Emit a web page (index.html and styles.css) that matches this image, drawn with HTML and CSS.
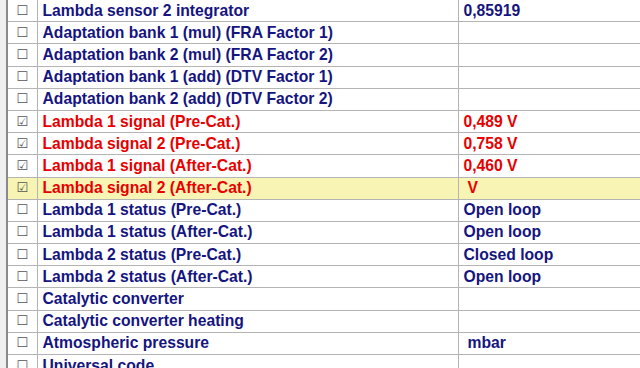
FILE: index.html
```html
<!DOCTYPE html>
<html>
<head>
<meta charset="utf-8">
<link rel="stylesheet" href="styles.css">
</head>
<body>
<div class="frame">
  <div class="gutter"></div>
  <table class="grid">
    <colgroup><col class="c-chk"><col class="c-name"><col class="c-val"></colgroup>
    <tr class="first"><td class="chk">☐</td><td>Lambda sensor 2 integrator</td><td>0,85919</td></tr>
    <tr><td class="chk">☐</td><td>Adaptation bank 1 (mul) (FRA Factor 1)</td><td></td></tr>
    <tr><td class="chk">☐</td><td>Adaptation bank 2 (mul) (FRA Factor 2)</td><td></td></tr>
    <tr><td class="chk">☐</td><td>Adaptation bank 1 (add) (DTV Factor 1)</td><td></td></tr>
    <tr><td class="chk">☐</td><td>Adaptation bank 2 (add) (DTV Factor 2)</td><td></td></tr>
    <tr class="on"><td class="chk">☑</td><td>Lambda 1 signal (Pre-Cat.)</td><td>0,489 V</td></tr>
    <tr class="on"><td class="chk">☑</td><td>Lambda signal 2 (Pre-Cat.)</td><td>0,758 V</td></tr>
    <tr class="on"><td class="chk">☑</td><td>Lambda 1 signal (After-Cat.)</td><td>0,460 V</td></tr>
    <tr class="on sel"><td class="chk">☑</td><td>Lambda signal 2 (After-Cat.)</td><td class="pad">V</td></tr>
    <tr><td class="chk">☐</td><td>Lambda 1 status (Pre-Cat.)</td><td>Open loop</td></tr>
    <tr><td class="chk">☐</td><td>Lambda 1 status (After-Cat.)</td><td>Open loop</td></tr>
    <tr><td class="chk">☐</td><td>Lambda 2 status (Pre-Cat.)</td><td>Closed loop</td></tr>
    <tr><td class="chk">☐</td><td>Lambda 2 status (After-Cat.)</td><td>Open loop</td></tr>
    <tr><td class="chk">☐</td><td>Catalytic converter</td><td></td></tr>
    <tr><td class="chk">☐</td><td>Catalytic converter heating</td><td></td></tr>
    <tr><td class="chk">☐</td><td>Atmospheric pressure</td><td class="pad">mbar</td></tr>
    <tr><td class="chk">☐</td><td>Universal code</td><td></td></tr>
  </table>
</div>
</body>
</html>
```
FILE: styles.css
```css
html, body {
  margin: 0;
  padding: 0;
  background: #ffffff;
  overflow: hidden;
}
.frame {
  display: flex;
  width: 640px;
  height: 368px;
  overflow: hidden;
}
.gutter {
  width: 6px;
  flex: none;
  background: #f0f0f0;
  border-right: 2px solid #8a8a8a;
}
.grid {
  border-collapse: collapse;
  table-layout: fixed;
  width: 632px;
  margin-top: -1px;
  font-family: "Liberation Sans", Arial, sans-serif;
  font-weight: bold;
  font-size: 15.7px;
  color: #15157f;
}
.c-chk { width: 29px; }
.c-name { width: 421px; }
.c-val { width: 182px; }
.grid tr { height: 22.2px; }
.grid td {
  border: 1px solid #b4b4b4;
  padding: 0 0 0 5px;
  white-space: nowrap;
  overflow: hidden;
  line-height: 20px;
  vertical-align: middle;
}
.grid td:first-child { border-left: none; }
.grid td:last-child { border-right: none; }
.grid td.chk {
  padding: 0;
  text-align: center;
  font-family: "DejaVu Sans", sans-serif;
  font-weight: normal;
  font-size: 13px;
  color: #555555;
}
.grid tr.on { color: #e80000; }
.grid tr.on td.chk { color: #555555; }
.grid tr.sel td { background: #f8f5b4; }
.grid td.pad { padding-left: 9px; }
```
